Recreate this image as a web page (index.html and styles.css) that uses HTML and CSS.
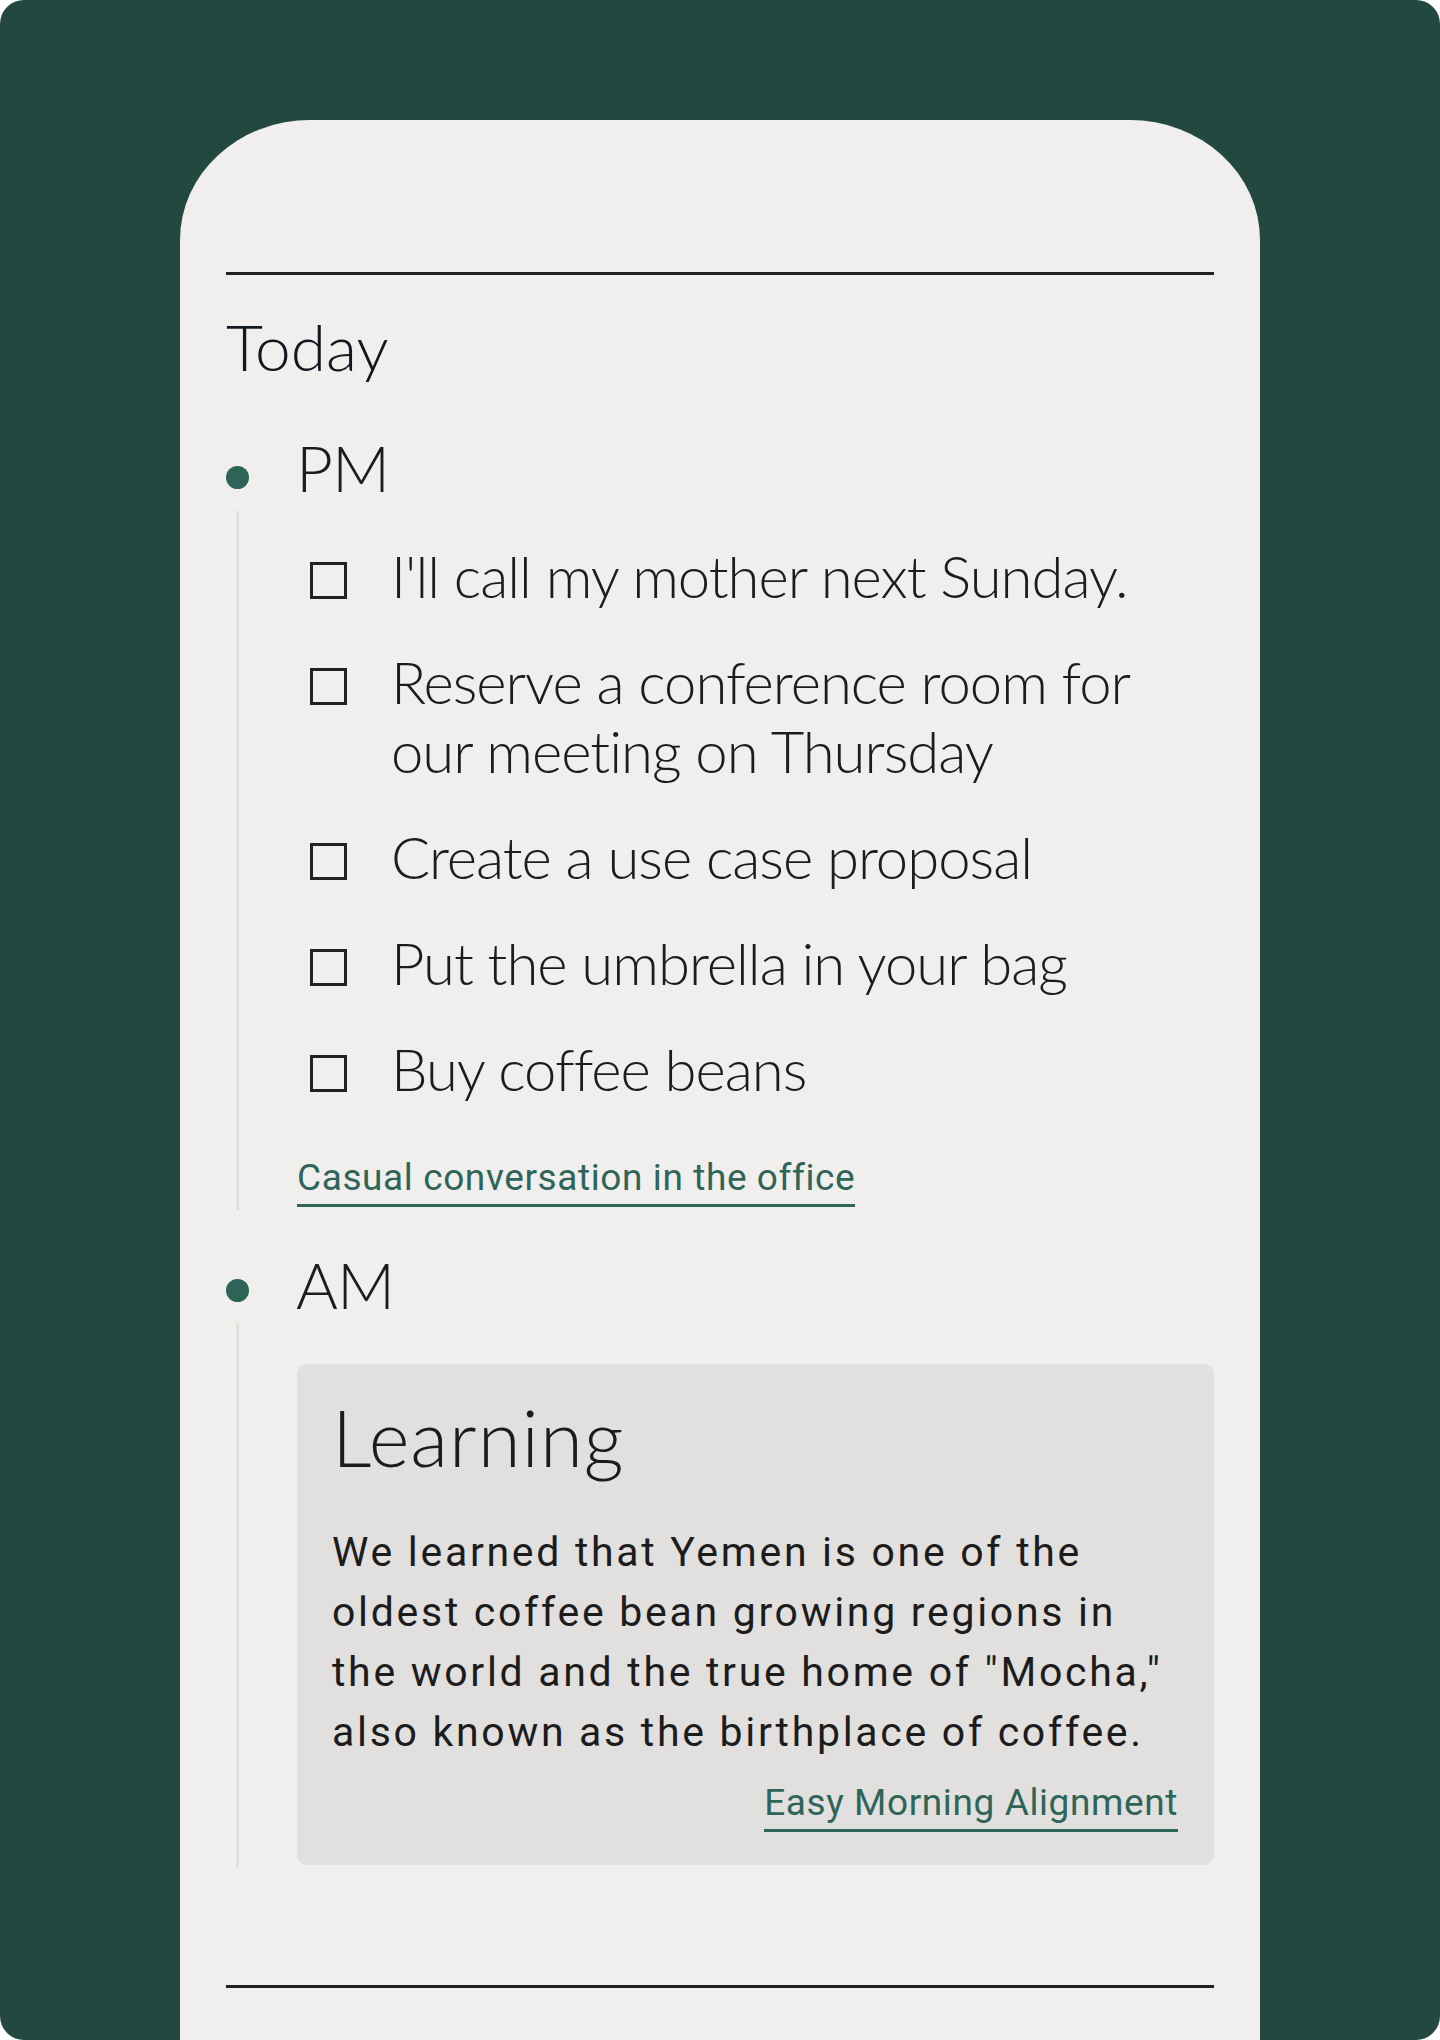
FILE: index.html
```html
<!DOCTYPE html>
<html lang="en">
<head>
  <meta charset="UTF-8">
  <meta name="viewport" content="width=device-width, initial-scale=1.0">
  <title>Today</title>
  <link rel="stylesheet" href="styles.css">
</head>
<body>
  <div class="frame">
    <div class="phone">
      <hr class="rule">

      <h1 class="day-title">Today</h1>

      <!-- PM -->
      <section class="period">
        <div class="period-head">
          <span class="dot"></span>
          <h2>PM</h2>
        </div>
        <div class="period-body">
          <ul class="tasks">
            <li><span class="box"></span><span class="task-text">I'll call my mother next Sunday.</span></li>
            <li><span class="box"></span><span class="task-text">Reserve a conference room for our meeting on Thursday</span></li>
            <li><span class="box"></span><span class="task-text">Create a use case proposal</span></li>
            <li><span class="box"></span><span class="task-text">Put the umbrella in your bag</span></li>
            <li><span class="box"></span><span class="task-text">Buy coffee beans</span></li>
          </ul>
          <a class="source-link pm-link" href="#">Casual conversation in the office</a>
        </div>
      </section>

      <!-- AM -->
      <section class="period">
        <div class="period-head am-head">
          <span class="dot"></span>
          <h2>AM</h2>
        </div>
        <div class="period-body am-body">
          <div class="learning-card">
            <h3>Learning</h3>
            <p>We learned that Yemen is one of the oldest coffee bean growing regions in the world and the true home of "Mocha," also known as the birthplace of coffee.</p>
            <div class="card-foot">
              <a class="source-link" href="#">Easy Morning Alignment</a>
            </div>
          </div>
        </div>
      </section>

      <hr class="rule bottom-rule">
    </div>
  </div>
</body>
</html>
```

FILE: styles.css
```css
body {
  margin: 0;
  padding: 0;
  background-color: #fff;
  font-family: "Lato", "Open Sans", sans-serif;
  color: #1c1c1c;
}

/* Outer green frame */
.frame {
  height: 2040px;
  box-sizing: border-box;
  padding-top: 120px;
  background-color: #23483f;
  border-radius: 24px;
  overflow: hidden;
}

/* Phone screen */
.phone {
  height: 1920px;
  box-sizing: border-box;
  margin: 0 180px;
  padding: 152px 46px 0;
  background-color: #f0efed;
  border-radius: 130px 130px 0 0 / 120px 120px 0 0;
}

.rule {
  margin: 0;
  border: none;
  border-top: 3px solid #222;
}

.bottom-rule {
  margin-top: 117px;
}

.day-title {
  margin: 34px 0 0;
  font-size: 64px;
  font-weight: 300;
  line-height: 1.2;
  color: #111820;
}

/* Timeline sections */
.period {
  margin-top: 44px;
}

.period + .period {
  margin-top: 37px;
}

.period-head {
  display: flex;
  align-items: flex-start;
}

.period-head h2 {
  margin: 0;
  font-size: 64px;
  font-weight: 300;
  line-height: 1.2;
  letter-spacing: -1px;
}

.dot {
  flex: none;
  width: 23px;
  height: 23px;
  margin: 36px 47px 0 0;
  border-radius: 50%;
  background-color: #2e6358;
}

.am-head .dot {
  margin-top: 32px;
}

.period-body {
  margin: 4px 0 0 10px;
  padding: 30px 0 3px 58px;
  border-left: 3px solid #e2e1de;
}

.am-body {
  margin-top: 0;
  padding-top: 41px;
}

/* Task list */
.tasks {
  list-style: none;
  margin: 0;
  padding: 0;
  display: flex;
  flex-direction: column;
  gap: 37px;
}

.tasks li {
  display: flex;
  align-items: flex-start;
}

.box {
  flex: none;
  width: 31px;
  height: 31px;
  margin: 21px 44px 0 13px;
  border: 3px solid #222;
}

.task-text {
  font-size: 58px;
  font-weight: 300;
  line-height: 69px;
  letter-spacing: -1px;
}

/* Links */
.source-link {
  display: inline-block;
  padding-bottom: 3px;
  border-bottom: 3px solid #2f6559;
  font-family: "Roboto", "Liberation Sans", sans-serif;
  font-size: 37px;
  font-weight: 400;
  line-height: 46px;
  letter-spacing: 0.6px;
  color: #2f6559;
  text-decoration: none;
}

.pm-link {
  margin-top: 52px;
}

/* Learning card */
.learning-card {
  padding: 27px 28px 33px 35px;
  background-color: #e1e0de;
  border-radius: 10px;
}

.learning-card h3 {
  margin: 0;
  font-size: 78px;
  font-weight: 300;
  line-height: 1.2;
  letter-spacing: 1px;
}

.learning-card p {
  margin: 37px 0 0;
  font-family: "Roboto", "Liberation Sans", sans-serif;
  font-size: 41px;
  font-weight: 400;
  line-height: 60px;
  letter-spacing: 2.7px;
}

.card-foot {
  margin-top: 18px;
  padding-right: 8px;
  text-align: right;
}
```
